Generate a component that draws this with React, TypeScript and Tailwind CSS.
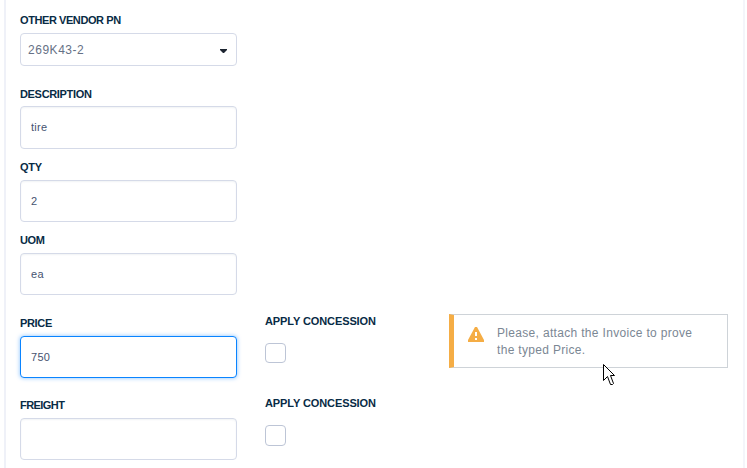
import type { ReactNode } from 'react';

function Label({ children, spacing }: { children: ReactNode; spacing: string }) {
  return (
    <div className={`h-4 whitespace-nowrap text-[11px] leading-4 font-bold text-[#082b45] ${spacing}`}>
      {children}
    </div>
  );
}

function Field({ label, value, spacing, height = 'h-[42px]', gap = 'mt-[5px]', focused = false }: {
  label: string; value: string; spacing: string; height?: string; gap?: string; focused?: boolean;
}) {
  return (
    <div className="w-[217px]">
      <Label spacing={spacing}>{label}</Label>
      <input
        aria-label={label}
        defaultValue={value}
        className={`block w-full rounded border bg-white px-[10px] text-[11px] tracking-[0.3px] text-[#465370] outline-none ${height} ${gap} ${
          focused
            ? 'border-[#0a84ff] shadow-[0_0_4px_rgba(10,132,255,0.5)]'
            : 'border-[#d5dae8] shadow-[inset_0_1px_2px_rgba(60,80,120,0.07)]'
        }`}
      />
    </div>
  );
}

function Concession({ boxHeight }: { boxHeight: string }) {
  return (
    <label className="block w-[112px]">
      <Label spacing="tracking-[-0.1px]">APPLY CONCESSION</Label>
      <span className={`mt-[14px] block w-[21px] rounded border border-[#bdc5d6] bg-white ${boxHeight}`} />
    </label>
  );
}

function Alert() {
  return (
    <div className="flex h-[54px] w-[279px] border border-l-[5px] border-[#ced3d8] border-l-[#f5ad45] bg-white">
      <svg className="mt-[12px] ml-[14px] h-[15px] w-4 shrink-0" viewBox="0 0 16 15" aria-hidden="true">
        <path d="M7 0H9L16 13V15H0V13Z" fill="#f5ad45" />
        <path d="M7 5h2v4H7zM7 11h2v2H7z" fill="#fff" />
      </svg>
      <p className="mt-[10px] ml-[13px] text-[12px] leading-[17px] tracking-[0.32px] whitespace-nowrap text-[#7b8794]">
        Please, attach the Invoice to prove
        <br />
        the typed Price.
      </p>
    </div>
  );
}

export default function App() {
  return (
    <main className="relative h-[468px] w-[747px] overflow-hidden bg-white pl-1 font-['Liberation_Sans',Arial,sans-serif]">
      <section className="h-full w-[741px] border-x-2 border-l-[#eff1f8] border-r-[#f4f5fa] pt-3 pl-[14px]">
        <div className="h-[74px] w-[217px]">
          <Label spacing="tracking-[-0.42px]">OTHER VENDOR PN</Label>
          <div className="mt-[5px] flex h-[33px] items-center justify-between rounded border border-[#d5dae8] pr-[9px] pl-[7px] text-[12px] tracking-[0.53px] text-[#667186]">
            <span>269K43-2</span>
            <svg className="mt-[2px] h-1 w-[7px]" viewBox="0 0 7 4" aria-hidden="true">
              <path d="M0 0H7V1L4 4H3L0 1Z" fill="#1c2430" />
            </svg>
          </div>
        </div>
        <div className="h-[73px]">
          <Field label="DESCRIPTION" value="tire" spacing="tracking-[-0.33px]" height="h-[43px] pb-[2px]" gap="mt-1" />
        </div>
        <div className="h-[73px]">
          <Field label="QTY" value="2" spacing="tracking-[-0.3px]" />
        </div>
        <div className="h-[81px]">
          <Field label="UOM" value="ea" spacing="tracking-[-0.4px]" />
        </div>
        <div className="flex h-[82px] items-start">
          <div className="pt-[2px]">
            <Field label="PRICE" value="750" spacing="tracking-[-0.35px]" focused />
          </div>
          <div className="ml-7">
            <Concession boxHeight="h-5" />
          </div>
          <div className="ml-[72px] pt-px">
            <Alert />
          </div>
        </div>
        <div className="flex items-start">
          <div className="pt-[2px]">
            <Field label="FREIGHT" value="" spacing="tracking-[-0.55px]" />
          </div>
          <div className="ml-7">
            <Concession boxHeight="h-[21px]" />
          </div>
        </div>
      </section>
      <svg className="absolute top-[364px] left-[603px] h-[21px] w-3" viewBox="0 0 12 21" aria-hidden="true">
        <path d="M.5.5V16.5L4.5 12.5L7.5 20.5H9.5L10.5 19.5L7.5 11.5H11.5Z" fill="#fff" stroke="#000" />
      </svg>
    </main>
  );
}
